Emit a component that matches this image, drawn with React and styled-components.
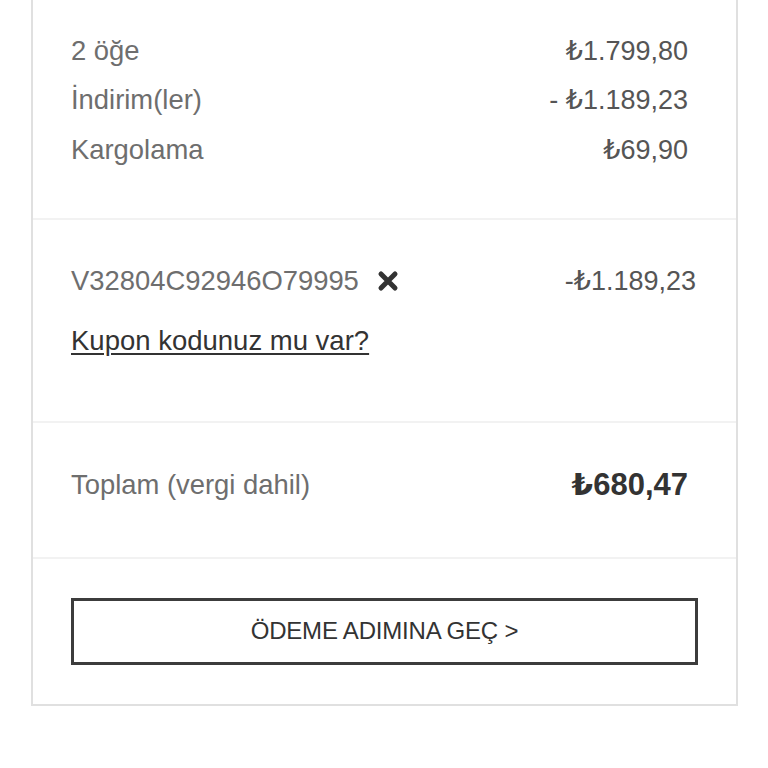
import styled, { createGlobalStyle } from "styled-components";

const GlobalStyle = createGlobalStyle`
  body {
    margin: 0;
    background: #fff;
    font-family: "Liberation Sans", Arial, "DejaVu Sans", sans-serif;
  }
`;

const Card = styled.div`
  margin: 0 30px 0 31px;
  border: 2px solid #e0e0e0;
  border-top: none;
  background: #fff;
`;

const Section = styled.div`
  padding: ${(p) => p.$pad};
  border-bottom: ${(p) => (p.$last ? "none" : "2px solid #f2f2f2")};
`;

const Row = styled.div`
  display: flex;
  justify-content: space-between;
  align-items: center;
  height: ${(p) => p.$h || "49.5px"};
  font-size: 27.4px;
  color: #6e6e6e;
`;

const Value = styled.span`
  color: #555;
  padding-right: ${(p) => p.$inset || "0"};
  font-size: ${(p) => (p.$big ? "31px" : "27px")};
  font-weight: ${(p) => (p.$big ? 700 : 400)};
  ${(p) => p.$big && "color: #333;"}
`;

const Code = styled.span`
  display: flex;
  align-items: center;
  gap: 18px;
`;

const RemoveIcon = styled.svg`
  width: 22px;
  height: 22px;
`;

const CouponLink = styled.a`
  display: inline-block;
  margin-top: 23px;
  font-size: 27.5px;
  color: #333;
  text-decoration: underline;
  text-underline-offset: 3px;
  text-decoration-thickness: 2px;
`;

const CheckoutButton = styled.button`
  display: block;
  width: 100%;
  height: 67px;
  border: 3px solid #3c3c3c;
  background: #fff;
  color: #333;
  font-family: inherit;
  font-size: 24px;
  letter-spacing: -0.2px;
`;

function App() {
  return (
    <>
      <GlobalStyle />
      <Card>
        <Section $pad="26px 40px 43px 38px">
          <Row>
            <span>2 öğe</span>
            <Value $inset="8px">₺1.799,80</Value>
          </Row>
          <Row>
            <span>İndirim(ler)</span>
            <Value $inset="8px">- ₺1.189,23</Value>
          </Row>
          <Row>
            <span>Kargolama</span>
            <Value $inset="8px">₺69,90</Value>
          </Row>
        </Section>
        <Section $pad="40px 40px 64px 38px">
          <Row $h="42px">
            <Code>
              V32804C92946O79995
              <RemoveIcon viewBox="0 0 22 22">
                <path
                  d="M4 4 L18 18 M18 4 L4 18"
                  stroke="#333"
                  strokeWidth="5"
                  strokeLinecap="round"
                />
              </RemoveIcon>
            </Code>
            <Value>-₺1.189,23</Value>
          </Row>
          <CouponLink href="#" onClick={(e) => e.preventDefault()}>
            Kupon kodunuz mu var?
          </CouponLink>
        </Section>
        <Section $pad="42px 40px 52px 38px">
          <Row $h="40px">
            <span>Toplam (vergi dahil)</span>
            <Value $big $inset="8px">₺680,47</Value>
          </Row>
        </Section>
        <Section $last $pad="39px 38px 39px 38px">
          <CheckoutButton>ÖDEME ADIMINA GEÇ &gt;</CheckoutButton>
        </Section>
      </Card>
    </>
  );
}

export default App;
